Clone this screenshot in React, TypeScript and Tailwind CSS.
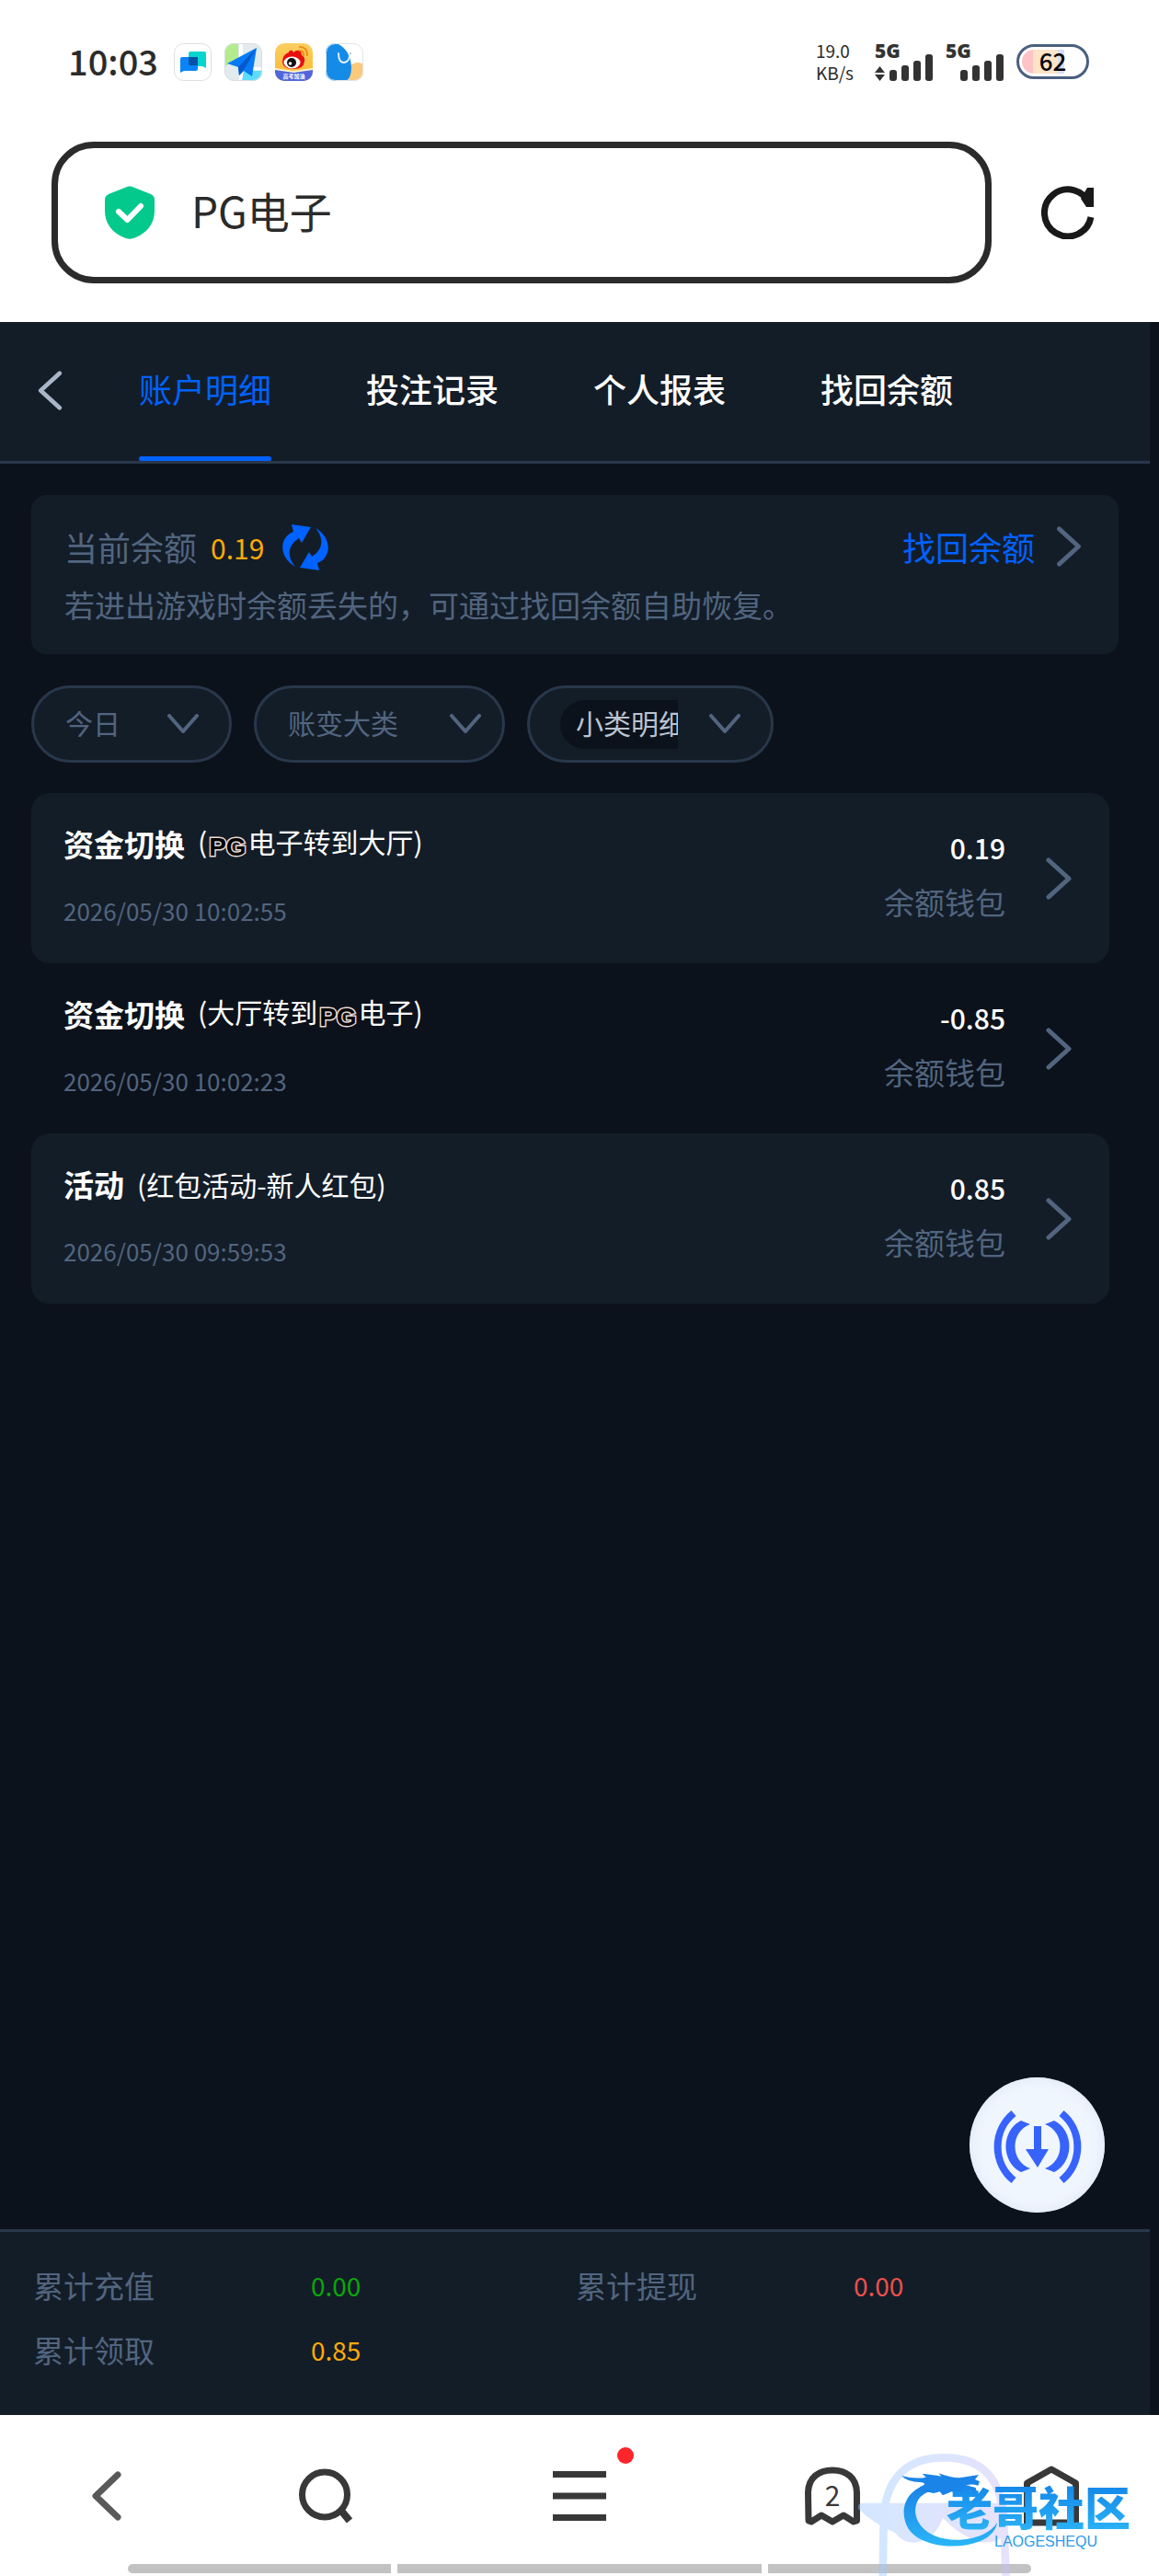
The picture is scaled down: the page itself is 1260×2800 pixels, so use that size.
import { useState } from 'react'
import type { ReactNode } from 'react'
import { clsx } from 'clsx'

const tabs = ['账户明细', '投注记录', '个人报表', '找回余额']

interface Entry {
  title: string
  detail: ReactNode
  time: string
  amount: string
}

const entries: Entry[] = [
  {
    title: '资金切换',
    detail: (
      <>
        (<PgMark />
        电子转到大厅)
      </>
    ),
    time: '2026/05/30 10:02:55',
    amount: '0.19',
  },
  {
    title: '资金切换',
    detail: (
      <>
        (大厅转到
        <PgMark />
        电子)
      </>
    ),
    time: '2026/05/30 10:02:23',
    amount: '-0.85',
  },
  {
    title: '活动',
    detail: '(红包活动-新人红包)',
    time: '2026/05/30 09:59:53',
    amount: '0.85',
  },
]

const totals = [
  { label: '累计充值', value: '0.00', color: 'text-[#08a80c]' },
  { label: '累计提现', value: '0.00', color: 'text-[#ef504c]' },
  { label: '累计领取', value: '0.85', color: 'text-[#ffaa09]' },
]

function PgMark() {
  return (
    <span className="mx-[2px] align-[-3px] font-['Liberation_Sans'] text-[28px] font-bold text-black [-webkit-text-stroke:3px_#ead8d2] [paint-order:stroke_fill]">
      PG
    </span>
  )
}

function Chevron({ className }: { className?: string }) {
  return (
    <svg viewBox="0 0 28 46" fill="none" className={className} aria-hidden="true">
      <path
        d="M3 3L25 23L3 43"
        stroke="currentColor"
        strokeWidth="5"
        strokeLinecap="round"
        strokeLinejoin="round"
      />
    </svg>
  )
}

function ChevronDown({ className }: { className?: string }) {
  return (
    <svg
      viewBox="0 0 34 22"
      fill="none"
      className={clsx('h-[22px] w-[34px] text-[#52657f]', className)}
      aria-hidden="true"
    >
      <path
        d="M2 2L17 19L32 2"
        stroke="currentColor"
        strokeWidth="4"
        strokeLinecap="round"
        strokeLinejoin="round"
      />
    </svg>
  )
}

function AppIcons() {
  return (
    <div className="flex gap-[14px]">
      <svg viewBox="0 0 41 41" className="size-[41px]" aria-hidden="true">
        <rect x="0.5" y="0.5" width="40" height="40" rx="10" fill="#fff" stroke="#dedede" />
        <path d="M18 9H33Q35 9 35 11V27L31 25H16V11Q16 9 18 9Z" fill="#06d5d0" />
        <path d="M9 15H26V28Q26 30 24 30H11L7 32V17Q7 15 9 15Z" fill="#0a84f8" />
        <path d="M16 15H26V24H18Q16 24 16 22Z" fill="#0651a8" />
      </svg>
      <svg viewBox="0 0 41 41" className="size-[41px]" aria-hidden="true">
        <clipPath id="map-clip">
          <rect width="41" height="41" rx="10" />
        </clipPath>
        <g clipPath="url(#map-clip)">
          <rect width="41" height="41" fill="#e3ebee" />
          <path d="M0 0H15V18L0 25Z" fill="#b2ec8c" />
          <path d="M16 0H20V41H16Z" fill="#fff" />
          <path d="M21 30H41V41H19Z" fill="#5cdcfb" />
          <path d="M22 26H41V29H22Z" fill="#fff" />
          <path d="M35 5L3 22L15 26L16 35L21 30L30 36Z" fill="#087af5" />
          <path d="M35 5L15 26L16 35L21 29Z" fill="#0359cc" />
        </g>
        <rect x="0.5" y="0.5" width="40" height="40" rx="10" fill="none" stroke="#d8dde0" />
      </svg>
      <svg viewBox="0 0 41 41" className="size-[41px]" aria-hidden="true">
        <defs>
          <linearGradient id="eye-bg" x1="0" y1="0" x2="0" y2="1">
            <stop offset="0" stopColor="#f9cf62" />
            <stop offset="1" stopColor="#fdb62b" />
          </linearGradient>
          <clipPath id="eye-clip">
            <rect width="41" height="41" rx="10" />
          </clipPath>
        </defs>
        <g clipPath="url(#eye-clip)">
          <rect width="41" height="41" fill="url(#eye-bg)" />
          <path
            d="M8 21Q8 12 15 10Q15 7 19 8L20 10Q24 6 28 9L29 13Q33 15 32 20Q31 28 20 28Q9 28 8 21Z"
            fill="#e8100f"
          />
          <ellipse cx="18.500" cy="21" rx="9" ry="6.500" fill="#fff" />
          <circle cx="18" cy="21" r="5" fill="#111" />
          <circle cx="16.500" cy="22" r="1.800" fill="#fff" />
          <path
            d="M27 4Q35 4 35 13M27 8Q31 8 31 13"
            fill="none"
            stroke="#f48c10"
            strokeWidth="2"
            strokeLinecap="round"
          />
          <path d="M0 28L20 31L41 28V41H0Z" fill="#5166dc" />
          <path d="M0 27L20 30L41 27V29L20 32L0 29Z" fill="#fff3d0" />
          <text
            x="20.500"
            y="38"
            textAnchor="middle"
            fontSize="6"
            fontWeight="700"
            fill="#fff"
          >
            高考加油
          </text>
        </g>
      </svg>
      <svg viewBox="0 0 41 41" className="size-[41px]" aria-hidden="true">
        <clipPath id="whale-clip">
          <rect width="41" height="41" rx="10" />
        </clipPath>
        <g clipPath="url(#whale-clip)">
          <rect width="41" height="41" fill="#fff" />
          <circle cx="35" cy="33" r="12" fill="#fbc97c" />
          <path d="M0 6Q4 -2 14 1Q27 8 28 26Q28 36 23 41H0Z" fill="#158be8" />
          <path
            d="M14 11Q14 21 20 21Q26 20 26 13"
            fill="none"
            stroke="#e9f4fd"
            strokeWidth="1.800"
            strokeLinecap="round"
          />
          <circle cx="27" cy="11" r="1" fill="#9db4c4" />
        </g>
        <rect x="0.5" y="0.5" width="40" height="40" rx="10" fill="none" stroke="#dfe5ea" />
      </svg>
    </div>
  )
}

function Signal({ arrows }: { arrows?: boolean }) {
  return (
    <div className="relative">
      <svg viewBox="0 0 64 42" className="h-[42px] w-[64px]" fill="#333" aria-hidden="true">
        {arrows && <path d="M5.500 26L11 33H0ZM5.500 42L0 35H11Z" />}
        <rect x="16" y="30" width="8" height="12" rx="3" />
        <rect x="29" y="25" width="8" height="17" rx="3" />
        <rect x="42" y="20" width="8" height="22" rx="3" />
        <rect x="55" y="13" width="8" height="29" rx="3" />
      </svg>
      <span className="absolute -top-[4px] left-0 font-['Open_Sans'] text-[21px] leading-[26px] font-extrabold text-[#333]">
        5G
      </span>
    </div>
  )
}

function StatusBar() {
  return (
    <div className="flex h-[134px] items-center justify-between pr-[76px] pl-[74px] text-[#2b2b2b]">
      <div className="flex items-center gap-[17px]">
        <time className="pb-[2px] text-[38px] leading-[42px] font-medium">10:03</time>
        <AppIcons />
      </div>
      <div className="flex items-center gap-[13px]">
        <div className="mr-[10px] text-[19px] leading-[24px]">
          <div>19.0</div>
          <div>KB/s</div>
        </div>
        <Signal arrows />
        <Signal />
        <div className="relative flex h-[38px] w-[79px] items-center rounded-full border-[3px] border-[#4a607f] p-[3px]">
          <div className="flex h-full w-[46px] overflow-hidden rounded-l-full">
            <span className="w-[12px] bg-[#fdc3c5]" />
            <span className="w-[27px] bg-[#fde3c8]" />
            <span className="w-[7px] bg-[#d3def8]" />
          </div>
          <span className="absolute inset-0 text-center text-[26px] leading-[30px] font-medium text-black">
            62
          </span>
        </div>
      </div>
    </div>
  )
}

function AddressBar() {
  return (
    <div className="flex items-center pt-[20px] pr-[70px] pb-[42px] pl-[56px]">
      <div className="flex h-[154px] flex-1 items-center gap-[40px] rounded-[46px] border-[7px] border-[#2b2b2b] px-[51px]">
        <svg viewBox="0 0 54 58" className="h-[58px] w-[54px] shrink-0" aria-hidden="true">
          <path
            d="M23 1.500Q27 -0.500 31 1.500L50 9Q54 11 54 15V27C54 42 45 52 31 57Q27 58.500 23 57C9 52 0 42 0 27V15Q0 11 4 9Z"
            fill="#04c98c"
          />
          <path
            d="M15 28L24.500 37L39 22"
            fill="none"
            stroke="#fff"
            strokeWidth="6"
            strokeLinecap="round"
            strokeLinejoin="round"
          />
        </svg>
        <input
          type="text"
          aria-label="网址"
          defaultValue="PG电子"
          className="min-w-0 flex-1 bg-transparent pb-[6px] text-[46px] leading-[56px] text-[#2b2b2b] outline-none"
        />
      </div>
      <button type="button" aria-label="刷新" className="ml-[54px]">
        <svg viewBox="0 0 58 58" className="size-[58px]" fill="none" aria-hidden="true">
          <path
            d="M53 21A25.500 25.500 0 1 0 54 34"
            stroke="#191919"
            strokeWidth="7"
          />
          <path d="M50 2H57V23H49L43 14Z" fill="#191919" />
        </svg>
      </button>
    </div>
  )
}

function Tabs() {
  const [active, setActive] = useState(0)

  return (
    <div className="flex h-[154px] border-b-[3px] border-[#28374a] bg-[#131d28]">
      <button type="button" aria-label="返回" className="w-[151px] pb-[2px] pl-[41px]">
        <Chevron className="h-[43px] w-[27px] rotate-180 text-[#a9b6c8]" />
      </button>
      <nav className="flex gap-[103px]">
        {tabs.map((tab, i) => (
          <button
            key={tab}
            type="button"
            onClick={() => setActive(i)}
            className={clsx(
              'relative pb-[8px] text-[36px] leading-[48px]',
              i === active ? 'text-[#0062ff]' : 'font-medium text-white',
            )}
          >
            {tab}
            {i === active && (
              <span className="absolute inset-x-0 bottom-0 h-[5px] rounded-full bg-[#0062ff]" />
            )}
          </button>
        ))}
      </nav>
    </div>
  )
}

function BalanceCard() {
  return (
    <section className="mx-[34px] rounded-[16px] bg-[#131d28] px-[36px] pt-[32px] pb-[31px]">
      <div className="flex h-[50px] items-center">
        <span className="pb-[2px] text-[36px]">当前余额</span>
        <span className="ml-[15px] text-[30px] text-[#ffaa09]">0.19</span>
        <button type="button" aria-label="刷新余额" className="ml-[20px]">
          <svg viewBox="0 0 50 50" className="size-[50px]" fill="#0062ff" aria-hidden="true">
            <path d="M10 0L31 3L21 20L18 15C5 23 5 36 14 46C-4 36 -4 14 12 8Z" />
            <path d="M40 50L19 47L29 30L32 35C45 27 45 14 36 4C54 14 54 36 38 42Z" />
          </svg>
        </button>
        <a
          href="#recover"
          className="mr-[4px] ml-auto flex items-center gap-[23px] pb-[2px] text-[36px] text-[#0062ff]"
        >
          找回余额
          <Chevron className="h-[44px] w-[28px] text-[#52657f]" />
        </a>
      </div>
      <p className="mt-[15px] text-[33px] leading-[45px]">
        若进出游戏时余额丢失的，可通过找回余额自助恢复。
      </p>
    </section>
  )
}

function Filters() {
  return (
    <div className="mt-[34px] ml-[34px] flex gap-[24px] text-[30px]">
      <div className="relative h-[84px] w-[218px]">
        <select
          aria-label="日期"
          className="size-full appearance-none rounded-full border-[3px] border-[#28374a] bg-[#131d28] pb-[4px] pl-[34px]"
        >
          <option>今日</option>
        </select>
        <ChevronDown className="pointer-events-none absolute top-[31px] right-[36px]" />
      </div>
      <div className="relative h-[84px] w-[273px]">
        <select
          aria-label="账变大类"
          className="size-full appearance-none rounded-full border-[3px] border-[#28374a] bg-[#131d28] pb-[4px] pl-[34px]"
        >
          <option>账变大类</option>
        </select>
        <ChevronDown className="pointer-events-none absolute top-[31px] right-[26px]" />
      </div>
      <div className="flex h-[84px] w-[268px] items-center rounded-full border-[3px] border-[#28374a] bg-[#131d28] pl-[33px]">
        <input
          type="text"
          aria-label="小类明细"
          defaultValue="小类明细"
          className="h-[53px] w-[128px] rounded-l-full bg-[#0c121b] pb-[4px] pl-[17px] text-[#b9c3d1] outline-none"
        />
        <button type="button" aria-label="展开小类" className="ml-[34px]">
          <ChevronDown />
        </button>
      </div>
    </div>
  )
}

function EntryRow({ entry, filled }: { entry: Entry; filled: boolean }) {
  return (
    <li
      className={clsx(
        'flex items-center rounded-[20px] pt-[35px] pr-[41px] pb-[39px] pl-[35px]',
        filled && 'bg-[#131d28]',
      )}
    >
      <div className="flex flex-1 flex-col gap-[35px]">
        <div className="flex h-[40px] items-center gap-[14px] text-white">
          <h2 className="text-[33px] leading-[40px] font-bold">{entry.title}</h2>
          <span className="text-[30px] leading-[40px]">{entry.detail}</span>
        </div>
        <time className="text-[26px] leading-[36px]">{entry.time}</time>
      </div>
      <div className="mr-[44px] flex flex-col gap-[19px] pb-[4px] text-right">
        <span className="text-[30px] leading-[40px] font-medium text-white">{entry.amount}</span>
        <span className="text-[33px] leading-[40px]">余额钱包</span>
      </div>
      <Chevron className="mt-[4px] h-[46px] w-[28px] text-[#52657f]" />
    </li>
  )
}

function Totals() {
  return (
    <dl className="grid grid-cols-2 gap-y-[22px] border-t-[3px] border-[#28374a] bg-[#131d28] pt-[34px] pr-[34px] pb-[47px] pl-[36px]">
      {totals.map((item) => (
        <div key={item.label} className="flex items-center">
          <dt className="w-[302px] text-[33px] leading-[48px]">{item.label}</dt>
          <dd className={clsx('text-[28px] leading-[48px]', item.color)}>{item.value}</dd>
        </div>
      ))}
    </dl>
  )
}

function FloatingButton() {
  return (
    <button
      type="button"
      aria-label="下载"
      className="absolute right-[49px] bottom-[18px] size-[147px] rounded-full bg-[#f0f6fe] shadow-[inset_0_0_14px_#dde5f5]"
    >
      <svg viewBox="0 0 147 147" className="size-full" fill="none" aria-hidden="true">
        <g stroke="#3763fb" strokeWidth="8">
          <path d="M48 39A47 47 0 0 0 48 112" />
          <path d="M100 39A47 47 0 0 1 100 112" />
        </g>
        <g fill="#3763fb">
          <path d="M56 47L66 51C44 59 44 91 66 99L56 103C34 92 34 58 56 47Z" />
          <path d="M92 47L82 51C104 59 104 91 82 99L92 103C114 92 114 58 92 47Z" />
          <path d="M70 53H78V78H86L74 98L61 78H70Z" />
        </g>
      </svg>
    </button>
  )
}

function Watermark() {
  return (
    <div className="pointer-events-none absolute right-0 bottom-0 h-[135px] w-[330px]">
      <svg viewBox="90 75 990 405" className="size-full" aria-hidden="true">
        <defs>
          <linearGradient id="arch" x1="0" y1="0" x2="1" y2="0">
            <stop offset="0" stopColor="#9fcbff" />
            <stop offset="1" stopColor="#c9c0fa" />
          </linearGradient>
          <linearGradient id="dragon" x1="0" y1="0" x2="0" y2="1">
            <stop offset="0" stopColor="#1a80e6" />
            <stop offset="1" stopColor="#2ab6f6" />
          </linearGradient>
        </defs>
        <g opacity="0.45">
          <path
            d="M179 480L182 310C182 170 250 94 380 94C510 94 570 170 574 310L581 480"
            fill="none"
            stroke="url(#arch)"
            strokeWidth="26"
          />
          <path
            d="M108 242H565V350Q560 372 500 370Q430 350 375 290Q350 360 290 370Q250 378 220 340Q150 310 100 262Q96 246 108 242Z"
            fill="url(#arch)"
          />
        </g>
        <path
          d="M345 178C250 190 230 270 262 325C300 385 420 398 500 365Q545 345 553 305Q520 355 430 362C340 365 285 320 285 265Q288 210 350 200Z"
          fill="url(#dragon)"
        />
        <path
          d="M240 153Q285 165 320 158L308 146Q340 150 370 155L362 145Q400 160 430 160L492 150L480 165L495 172L490 185Q470 178 450 184L482 192L485 205L450 202L430 212L404 205L375 217L365 205L345 210L320 205Q300 200 300 190Q330 178 300 174Q260 174 240 153Z"
          fill="#1a84e8"
        />
      </svg>
      <div className="absolute top-[28px] left-[99px] flex flex-col items-center">
        <span className="bg-linear-to-b from-[#1380e8] to-[#2cb4f6] bg-clip-text text-[50px] leading-[60px] font-black text-transparent">
          老哥社区
        </span>
        <span className="pl-[16px] font-['Liberation_Sans'] text-[16px] leading-[20px] text-[#2a9cec]">
          LAOGESHEQU
        </span>
      </div>
    </div>
  )
}

function BrowserBar() {
  return (
    <footer className="relative bg-white text-[#383838]">
      <div className="grid h-[162px] grid-cols-[232fr_244fr_308fr_242fr_234fr] items-center justify-items-center pt-[14px]">
        <button type="button" aria-label="后退">
          <svg viewBox="0 0 32 54" className="h-[54px] w-[32px]" fill="none" aria-hidden="true">
            <path
              d="M28 4L4 27L28 50"
              stroke="#595959"
              strokeWidth="7"
              strokeLinecap="round"
              strokeLinejoin="round"
            />
          </svg>
        </button>
        <button type="button" aria-label="搜索">
          <svg viewBox="0 0 58 60" className="h-[60px] w-[58px]" fill="none" aria-hidden="true">
            <circle cx="28" cy="28.500" r="24.500" stroke="currentColor" strokeWidth="7" />
            <path d="M46 46L55 57" stroke="currentColor" strokeWidth="8" />
          </svg>
        </button>
        <button type="button" aria-label="菜单" className="relative">
          <svg viewBox="0 0 58 54" className="h-[54px] w-[58px]" fill="currentColor" aria-hidden="true">
            <rect width="58" height="7" />
            <rect y="23.500" width="58" height="7" />
            <rect y="47" width="58" height="7" />
          </svg>
          <span className="absolute -top-[26px] -right-[30px] size-[18px] rounded-full bg-[#ff262b]" />
        </button>
        <button type="button" aria-label="标签页" className="relative">
          <svg viewBox="0 0 60 64" className="h-[64px] w-[60px]" fill="none" aria-hidden="true">
            <path
              d="M4 59L3.500 28C4 12 15 4 30 4S56 12 56.500 28V59L53 60L42 53L30 60L18 53L7 60Z"
              stroke="currentColor"
              strokeWidth="7"
              strokeLinejoin="round"
            />
          </svg>
          <span className="absolute inset-0 text-center text-[30px] leading-[60px]">2</span>
        </button>
        <button type="button" aria-label="主页">
          <svg viewBox="0 0 60 66" className="h-[66px] w-[60px]" fill="none" aria-hidden="true">
            <path
              d="M3.500 62V19L30 4L56.500 19V62Z"
              stroke="currentColor"
              strokeWidth="7"
              strokeLinejoin="round"
            />
          </svg>
        </button>
      </div>
      <div className="flex h-[13px] gap-[7px] px-[139px] pb-[3px]">
        <span className="w-[286px] rounded-l-full bg-[#c2c2c2]" />
        <span className="flex-1 bg-[#c2c2c2]" />
        <span className="w-[286px] rounded-r-full bg-[#c2c2c2]" />
      </div>
      <Watermark />
    </footer>
  )
}

export default function App() {
  return (
    <div className="flex min-h-screen flex-col bg-white font-['Noto_Sans_CJK_SC',sans-serif]">
      <header>
        <StatusBar />
        <AddressBar />
      </header>
      <main className="flex flex-1 flex-col bg-[#0c121b] pr-[10px] text-[#52657f]">
        <Tabs />
        <div className="relative flex-1 pt-[34px]">
          <BalanceCard />
          <Filters />
          <ul className="mt-[33px] mr-[44px] ml-[34px]">
            {entries.map((entry, i) => (
              <EntryRow key={entry.time} entry={entry} filled={i % 2 === 0} />
            ))}
          </ul>
          <FloatingButton />
        </div>
        <Totals />
      </main>
      <BrowserBar />
    </div>
  )
}
